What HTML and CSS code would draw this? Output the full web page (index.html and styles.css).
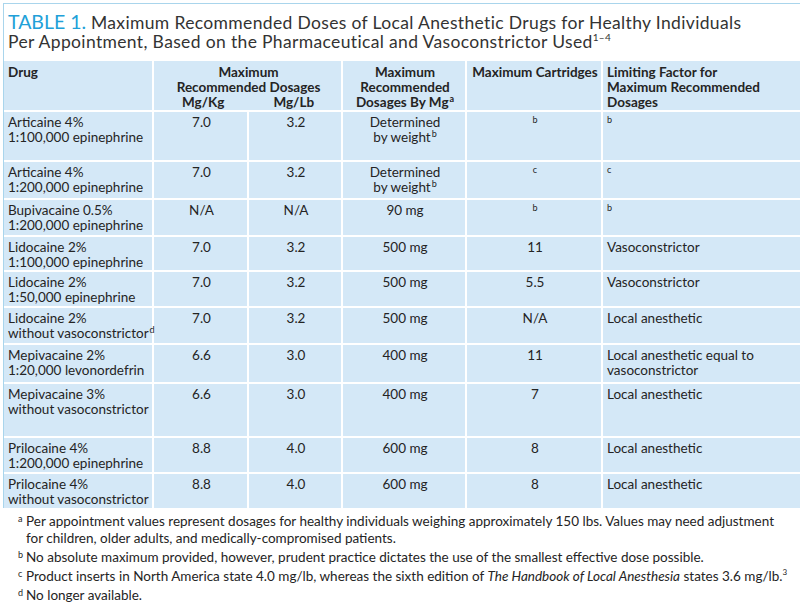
FILE: index.html
```html
<!DOCTYPE html>
<html>
<head>
<meta charset="utf-8">
<link rel="stylesheet" href="styles.css">
</head>
<body>
<div class="frame">
  <h1 class="title"><span class="label">TABLE 1.</span> Maximum Recommended Doses of Local Anesthetic Drugs for Healthy Individuals<br>Per Appointment, Based on the Pharmaceutical and Vasoconstrictor Used<sup class="tsup">1–4</sup></h1>
  <table class="doses">
    <colgroup>
      <col class="c1"><col class="c2"><col class="c3"><col class="c4"><col class="c5"><col class="c6">
    </colgroup>
    <thead>
      <tr class="hrow">
        <th class="left">Drug</th>
        <th colspan="2" class="center">Maximum<br>Recommended Dosages
          <div class="sub"><span>Mg/Kg</span><span>Mg/Lb</span></div>
        </th>
        <th class="center">Maximum<br>Recommended<br>Dosages By Mg<sup>a</sup></th>
        <th class="center nowrap">Maximum Cartridges</th>
        <th class="left">Limiting Factor for<br>Maximum Recommended<br>Dosages</th>
      </tr>
    </thead>
    <tbody>
      <tr class="r1"><td>Articaine 4%<br>1:100,000 epinephrine</td><td class="num">7.0</td><td class="num">3.2</td><td class="num">Determined<br>by weight<sup>b</sup></td><td class="num"><sup class="note">b</sup></td><td><sup class="note">b</sup></td></tr>
      <tr class="r2"><td>Articaine 4%<br>1:200,000 epinephrine</td><td class="num">7.0</td><td class="num">3.2</td><td class="num">Determined<br>by weight<sup>b</sup></td><td class="num"><sup class="note">c</sup></td><td><sup class="note">c</sup></td></tr>
      <tr class="r3"><td>Bupivacaine 0.5%<br>1:200,000 epinephrine</td><td class="num">N/A</td><td class="num">N/A</td><td class="num">90 mg</td><td class="num"><sup class="note">b</sup></td><td><sup class="note">b</sup></td></tr>
      <tr class="r4"><td>Lidocaine 2%<br>1:100,000 epinephrine</td><td class="num">7.0</td><td class="num">3.2</td><td class="num">500 mg</td><td class="num">11</td><td>Vasoconstrictor</td></tr>
      <tr class="r5"><td>Lidocaine 2%<br>1:50,000 epinephrine</td><td class="num">7.0</td><td class="num">3.2</td><td class="num">500 mg</td><td class="num">5.5</td><td>Vasoconstrictor</td></tr>
      <tr class="r6"><td>Lidocaine 2%<br>without vasoconstrictor<sup>d</sup></td><td class="num">7.0</td><td class="num">3.2</td><td class="num">500 mg</td><td class="num">N/A</td><td>Local anesthetic</td></tr>
      <tr class="r7"><td>Mepivacaine 2%<br>1:20,000 levonordefrin</td><td class="num">6.6</td><td class="num">3.0</td><td class="num">400 mg</td><td class="num">11</td><td>Local anesthetic equal to<br>vasoconstrictor</td></tr>
      <tr class="r8"><td>Mepivacaine 3%<br>without vasoconstrictor</td><td class="num">6.6</td><td class="num">3.0</td><td class="num">400 mg</td><td class="num">7</td><td>Local anesthetic</td></tr>
      <tr class="r9"><td>Prilocaine 4%<br>1:200,000 epinephrine</td><td class="num">8.8</td><td class="num">4.0</td><td class="num">600 mg</td><td class="num">8</td><td>Local anesthetic</td></tr>
      <tr class="r10"><td>Prilocaine 4%<br>without vasoconstrictor</td><td class="num">8.8</td><td class="num">4.0</td><td class="num">600 mg</td><td class="num">8</td><td>Local anesthetic</td></tr>
    </tbody>
  </table>
</div>
<div class="notes">
  <p class="fn"><sup>a</sup><span>Per appointment values represent dosages for healthy individuals weighing approximately 150 lbs. Values may need adjustment for children, older adults, and medically-compromised patients.</span></p>
  <p class="fn nowrap"><sup>b</sup><span>No absolute maximum provided, however, prudent practice dictates the use of the smallest effective dose possible.</span></p>
  <p class="fn nowrap"><sup>c</sup><span>Product inserts in North America state 4.0 mg/lb, whereas the sixth edition of <i>The Handbook of Local Anesthesia</i> states 3.6 mg/lb.<sup class="ref">3</sup></span></p>
  <p class="fn nowrap"><sup>d</sup><span>No longer available.</span></p>
</div>
</body>
</html>
```

FILE: styles.css
```css
html, body {
  margin: 0;
  padding: 0;
  background: #ffffff;
}
body {
  font-family: Lato, "Open Sans", "Liberation Sans", sans-serif;
  color: #242424;
  width: 800px;
  overflow: hidden;
}
.frame {
  margin: 3px 0 0 3px;
  border-top: 1.5px solid #a9d5ec;
  border-left: 1.5px solid #a9d5ec;
}
.title {
  margin: 0;
  padding: 8px 0 0 4px;
  height: 57px;
  box-sizing: border-box;
  font-weight: normal;
  font-size: 17.5px;
  line-height: 19px;
  color: #333;
  letter-spacing: 0.35px;
}
.title .label {
  color: #21a0d8;
  font-size: 19.5px;
  letter-spacing: 0;
}
.tsup {
  font-size: 10px;
  vertical-align: 7px;
  line-height: 0;
}
.doses {
  width: 797px;
  table-layout: fixed;
  border-collapse: collapse;
  background: #d4e8f7;
  font-size: 13.5px;
  line-height: 15px;
}
.c1 { width: 149px; }
.c2 { width: 95px; }
.c3 { width: 94px; }
.c4 { width: 124px; }
.c5 { width: 136px; }
.c6 { width: 199px; }
.doses th, .doses td {
  border: 2px solid #ffffff;
  vertical-align: top;
  padding: 3px 2px 0 4px;
  text-align: left;
}
.doses td:first-child { white-space: nowrap; }
.doses tr > :first-child { border-left: none; }
.doses tr > :last-child { border-right: none; }
.doses thead th { border-top: none; }
.doses tbody tr:last-child td { border-bottom: none; }
.doses th {
  font-weight: bold;
  padding-top: 4px;
}
.doses th.center, .doses td.num { text-align: center; }
.nowrap { white-space: nowrap; }
.sub {
  display: flex;
}
.sub span {
  flex: 1;
  text-align: center;
}
.hrow { height: 50px; }
.r1 { height: 50px; }
.r2 { height: 38px; }
.r3 { height: 37px; }
.r4 { height: 35px; }
.r5 { height: 36px; }
.r6 { height: 37px; }
.r7 { height: 39px; }
.r8 { height: 54px; }
.r9 { height: 36px; }
.r10 { height: 35px; }
.doses sup {
  font-size: 9px;
  line-height: 0;
  vertical-align: 5px;
  margin-left: 1px;
}
.doses sup.note {
  vertical-align: 4px;
  margin-left: 0;
}
.notes {
  width: 762px;
  padding: 5px 0 0 18px;
  font-size: 13.5px;
  line-height: 17px;
}
.fn {
  margin: 0 0 2px 0;
  display: flex;
  gap: 2px;
}
.fn > sup {
  font-size: 9px;
  line-height: 12px;
  width: 6px;
  flex: none;
}
.fn .ref {
  font-size: 8px;
  vertical-align: 6px;
  line-height: 0;
}
```
